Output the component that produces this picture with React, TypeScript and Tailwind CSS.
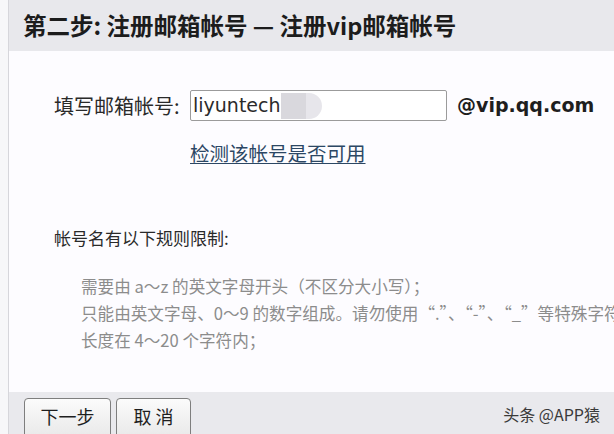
const cjk = "font-['Noto_Sans_CJK_SC','Noto_Sans',sans-serif]";

const rules = [
  "需要由 a～z 的英文字母开头（不区分大小写）；",
  "只能由英文字母、0～9 的数字组成。请勿使用“.”、“-”、“_”等特殊字符",
  "长度在 4～20 个字符内；",
];

export default function App() {
  return (
    <div className={`flex w-[614px] h-[434px] overflow-hidden bg-[#eaeaee] ${cjk}`}>
      <div className="w-[9px] shrink-0 bg-[#f7f7f9] border-r border-[#d6d6db]" />
      <div className="flex flex-col flex-1 min-w-0">
        {/* title bar */}
        <div className="h-[51px] shrink-0 flex items-center pl-[14px] bg-[#e8e8ec]">
          <h1 className="text-[23.5px] font-bold text-[#1c1c1c] whitespace-nowrap leading-none">
            第二步: 注册邮箱帐号 — 注册vip邮箱帐号
          </h1>
        </div>

        {/* form panel */}
        <div className="flex-1 bg-[#fdfcff] pl-[45px]">
          <div className="mt-[39px] flex items-center h-[31px]">
            <span className="w-[136px] text-[20px] text-[#2a2a2a] leading-none">填写邮箱帐号:</span>
            <div className="w-[257px] h-[31px] border border-[#9b9b9b] rounded-[2px] bg-white flex items-center pl-[2px]">
              <span className="font-['DejaVu_Sans',sans-serif] text-[19px] text-[#2b2b2b] leading-none">liyuntech</span>
              <span className="w-[25px] h-[26px] bg-[#d9d8dd]" />
              <span className="w-[16px] h-[26px] bg-[#e7e6eb] rounded-r-full" />
            </div>
            <span className="ml-[10px] font-['DejaVu_Sans',sans-serif] font-bold text-[19px] text-[#1e1e1e] leading-none">
              @vip.qq.com
            </span>
          </div>
          <div className="mt-[19px] pl-[136px] leading-[26px]">
            <a className="text-[19.5px] text-[#2c4764] underline underline-offset-2 cursor-pointer">检测该帐号是否可用</a>
          </div>

          <p className="mt-[59px] text-[17px] leading-[24px] text-[#2a2a2a]">帐号名有以下规则限制:</p>
          <ul className="mt-[23px] pl-[27px] text-[16.6px] leading-[27px] text-[#8c8c8c]">
            {rules.map((r, i) => (
              <li key={i} className="whitespace-nowrap">{r}</li>
            ))}
          </ul>
        </div>

        {/* footer */}
        <div className="h-[42px] shrink-0 bg-[#e9e9ed] flex items-start pt-[6px] pl-[15px] pr-[14px]">
          <button className="w-[87px] h-[40px] border border-[#7e7e7e] rounded-[4px] bg-gradient-to-b from-[#fbfbfb] to-[#e9e9e9] text-[18px] text-[#1e1e1e] pb-[4px]">
            下一步
          </button>
          <button className="ml-[5px] w-[75px] h-[40px] border border-[#7e7e7e] rounded-[4px] bg-gradient-to-b from-[#fbfbfb] to-[#e9e9e9] text-[18px] text-[#1e1e1e] pb-[4px]">
            取 消
          </button>
          <span className="ml-auto mt-[4px] text-[16px] text-[#3a3a3a]">头条 @APP猿</span>
        </div>
      </div>
    </div>
  );
}
